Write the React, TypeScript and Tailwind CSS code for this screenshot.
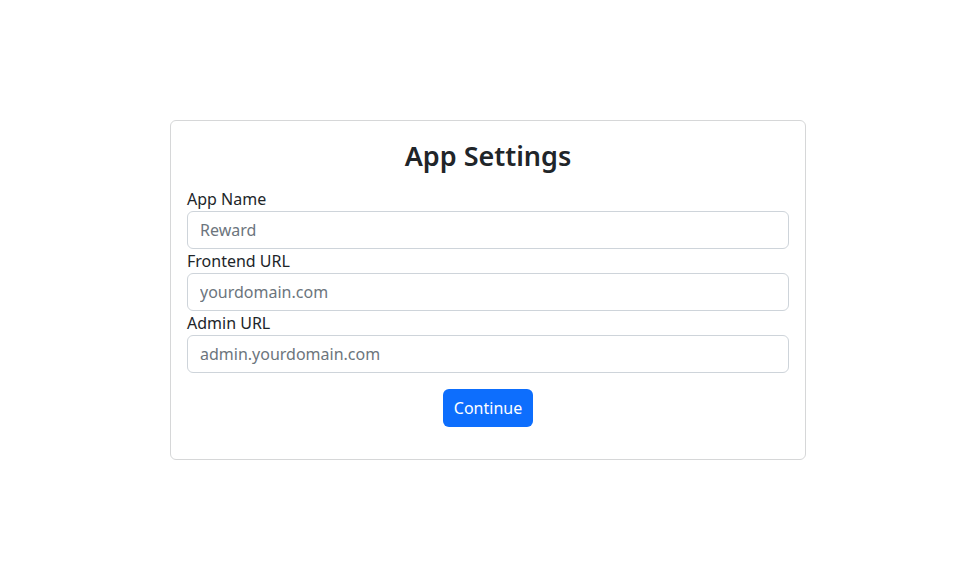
export default function App() {
  const fields = [
    { label: 'App Name', placeholder: 'Reward' },
    { label: 'Frontend URL', placeholder: 'yourdomain.com' },
    { label: 'Admin URL', placeholder: 'admin.yourdomain.com' },
  ];

  return (
    <div
      className="min-h-screen flex items-center justify-center bg-white text-[#212529] pl-1 pb-[2px]"
      style={{ fontFamily: '"Noto Sans", "Open Sans", sans-serif' }}
    >
      <div className="w-[636px] border border-[#d6d7d8] rounded-md p-4">
        <h3 className="text-center text-[27px] leading-[38px] font-semibold mb-3">App Settings</h3>
        <form className="flex flex-col" onSubmit={(e) => e.preventDefault()}>
          {fields.map((f) => (
            <div key={f.label} className="flex flex-col">
              <label className="text-base leading-6">{f.label}</label>
              <input
                type="text"
                placeholder={f.placeholder}
                className="h-[38px] px-3 border border-[#ced4da] rounded-md text-base placeholder:text-[#6c757d] focus:outline-none"
              />
            </div>
          ))}
          <div className="flex justify-center my-4">
            <button
              type="submit"
              className="h-[38px] w-[90px] rounded-md bg-[#0d6efd] text-white text-base"
            >
              Continue
            </button>
          </div>
        </form>
      </div>
    </div>
  );
}
